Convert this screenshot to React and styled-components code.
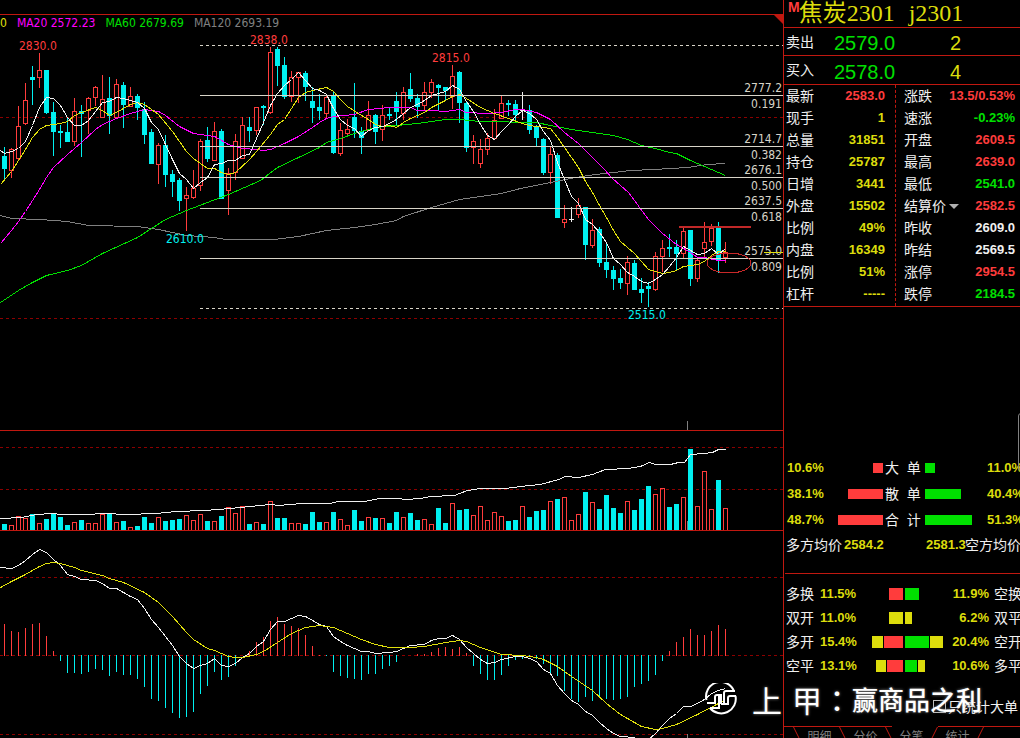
import React from 'react';
import styled, { createGlobalStyle } from 'styled-components';

const STEP = 7;
const FIRST_X = 4;
const xOf = (i) => FIRST_X + i * STEP;

// [kind, high, bodyTop, bodyBottom, low, volume, macd]   r = rising, c = falling, w = flat
const candles = [
	[ 'c', 147, 156, 169, 180, 6, 32 ], [ 'r', 148, 149, 171, 178, 5, 25 ], [ 'r', 106, 126, 159, 161, 14, 24 ],
	[ 'r', 83, 100, 124, 125, 12, 28 ], [ 'c', 66, 77, 80, 105, 16, 32 ], [ 'r', 53, 70, 78, 88, 7, 33 ],
	[ 'c', 70, 70, 113, 114, 11, 20 ], [ 'c', 102, 112, 132, 156, 17, 5 ], [ 'c', 125, 131, 133, 148, 13, -6 ],
	[ 'c', 118, 132, 142, 142, 5, -18 ], [ 'r', 98, 111, 142, 146, 8, -18 ], [ 'c', 105, 111, 114, 157, 10, -19 ],
	[ 'r', 97, 98, 111, 134, 7, -17 ], [ 'r', 86, 87, 98, 106, 7, -14 ], [ 'r', 75, 99, 118, 118, 16, -15 ],
	[ 'c', 77, 98, 116, 134, 16, -21 ], [ 'r', 79, 84, 118, 118, 8, -17 ], [ 'c', 82, 85, 105, 128, 9, -20 ],
	[ 'r', 87, 96, 107, 107, 3, -20 ], [ 'c', 94, 96, 108, 120, 4, -24 ], [ 'c', 102, 109, 135, 144, 13, -32 ],
	[ 'c', 129, 132, 164, 164, 7, -44 ], [ 'r', 143, 145, 165, 184, 13, -46 ], [ 'c', 135, 145, 175, 187, 9, -53 ],
	[ 'c', 170, 174, 182, 197, 10, -58 ], [ 'c', 178, 180, 201, 211, 11, -63 ], [ 'r', 187, 195, 199, 231, 15, -62 ],
	[ 'r', 170, 188, 198, 199, 10, -57 ], [ 'r', 139, 141, 186, 191, 16, -39 ], [ 'c', 127, 140, 159, 162, 9, -31 ],
	[ 'r', 122, 131, 161, 161, 9, -17 ], [ 'c', 129, 131, 199, 199, 14, -25 ], [ 'r', 168, 173, 191, 215, 23, -22 ],
	[ 'r', 134, 141, 173, 180, 17, -11 ], [ 'r', 117, 125, 159, 159, 24, 0 ], [ 'c', 117, 127, 131, 142, 6, 5 ],
	[ 'r', 107, 107, 131, 135, 8, 14 ], [ 'c', 105, 106, 108, 125, 6, 19 ], [ 'r', 47, 52, 113, 114, 29, 35 ],
	[ 'c', 47, 49, 66, 86, 12, 39 ], [ 'c', 57, 65, 97, 99, 12, 32 ], [ 'r', 71, 77, 97, 102, 7, 30 ],
	[ 'r', 72, 72, 78, 103, 7, 28 ], [ 'c', 71, 73, 87, 101, 6, 21 ], [ 'c', 87, 101, 108, 123, 18, 10 ],
	[ 'c', 94, 107, 111, 120, 8, 1 ], [ 'r', 95, 97, 114, 118, 8, -1 ], [ 'c', 91, 95, 153, 154, 18, -17 ],
	[ 'r', 123, 130, 154, 156, 11, -21 ], [ 'r', 119, 129, 134, 135, 5, -23 ], [ 'c', 83, 117, 131, 138, 20, -24 ],
	[ 'c', 127, 131, 138, 154, 9, -25 ], [ 'r', 101, 115, 131, 131, 13, -19 ], [ 'c', 114, 115, 132, 144, 12, -19 ],
	[ 'r', 105, 115, 130, 141, 12, -14 ], [ 'c', 108, 114, 116, 120, 7, -11 ], [ 'c', 92, 101, 112, 126, 18, -7 ],
	[ 'r', 87, 92, 114, 120, 13, 0 ], [ 'c', 73, 89, 99, 102, 17, 0 ], [ 'c', 94, 98, 107, 118, 10, 2 ],
	[ 'r', 82, 92, 106, 110, 11, 2 ], [ 'r', 79, 82, 93, 98, 6, 4 ], [ 'c', 84, 85, 88, 110, 22, 8 ],
	[ 'c', 87, 87, 91, 101, 7, 9 ], [ 'r', 65, 76, 97, 109, 27, 7 ], [ 'c', 71, 72, 103, 123, 20, 9 ],
	[ 'c', 101, 103, 148, 152, 21, 3 ], [ 'r', 135, 141, 148, 164, 15, -11 ], [ 'r', 139, 149, 164, 168, 24, -19 ],
	[ 'r', 133, 138, 150, 155, 10, -25 ], [ 'r', 109, 120, 139, 140, 18, -25 ], [ 'r', 96, 103, 119, 119, 14, -20 ],
	[ 'c', 100, 103, 105, 116, 9, -11 ], [ 'c', 100, 104, 115, 121, 10, -5 ], [ 'w', 92, 110, 111, 120, 24, -4 ],
	[ 'c', 105, 110, 130, 134, 13, -1 ], [ 'c', 125, 127, 138, 146, 19, -4 ], [ 'c', 138, 139, 173, 175, 20, -9 ],
	[ 'r', 147, 154, 173, 184, 29, -20 ], [ 'c', 153, 155, 218, 218, 31, -21 ], [ 'r', 205, 219, 223, 228, 33, -36 ],
	[ 'w', 207, 219, 220, 222, 10, -44 ], [ 'r', 198, 205, 215, 218, 16, -47 ], [ 'c', 207, 207, 245, 260, 38, -42 ],
	[ 'r', 219, 230, 246, 248, 28, -46 ], [ 'c', 227, 229, 263, 267, 21, -42 ], [ 'c', 242, 262, 270, 278, 35, -44 ],
	[ 'c', 266, 270, 279, 290, 22, -45 ], [ 'c', 269, 278, 283, 289, 17, -44 ], [ 'r', 256, 262, 284, 295, 29, -42 ],
	[ 'c', 260, 263, 290, 290, 20, -32 ], [ 'c', 278, 289, 293, 303, 31, -29 ], [ 'c', 282, 286, 289, 307, 44, -26 ],
	[ 'r', 252, 256, 290, 291, 36, -20 ], [ 'r', 240, 248, 257, 272, 42, -6 ], [ 'c', 234, 247, 249, 257, 23, 5 ],
	[ 'c', 240, 247, 254, 270, 26, 14 ], [ 'r', 227, 231, 254, 258, 33, 19 ], [ 'c', 230, 230, 279, 286, 81, 27 ],
	[ 'r', 258, 260, 279, 282, 24, 21 ], [ 'r', 222, 242, 249, 258, 59, 21 ], [ 'r', 224, 228, 242, 246, 21, 25 ],
	[ 'c', 222, 228, 260, 273, 50, 31 ], [ 'r', 242, 252, 258, 263, 22, 27 ]
];

const colors = {
	r: '#ff3c3c',
	c: '#00f0f0',
	w: '#f0f0f0',
	line: '#c01810',
	dash: '#8c0000',
	yellow: '#e0e00c',
	magenta: '#ff00ff',
	green: '#00e000',
	grey: '#808080',
	cream: '#d8d4c8'
};

const averages = [
	{
		color: colors.grey,
		points:
			'0,215 11,218 39,219 67,221 88,225 137,226 158,229 186,235 214,237 225,239 274,239 298,236 312,233 326,230 354,227 375,224 396,220 403,216 431,207 459,199 501,193 520,188 550,182 570,178 587,175 613,172 630,170 653,169 687,167 707,164 725,163'
	},
	{
		color: colors.green,
		points:
			'0,302 18,290 32,282 46,275 67,270 81,265 102,253 137,237 165,219 186,210 228,194 260,180 277,167 298,157 319,147 326,142 340,138 354,133 375,127 396,125 417,123 445,119 459,119 480,121 536,122 550,125 571,129 592,132 613,135 627,139 641,145 655,148 669,152 676,153 690,160 704,166 718,172 725,175'
	},
	{
		color: colors.magenta,
		points:
			'0,243 11,230 18,221 25,211 32,200 39,189 46,177 53,167 67,154 81,142 95,129 102,124 116,118 130,113 144,109 158,111 165,115 179,126 193,133 207,135 214,136 221,140 228,144 242,148 256,149 263,150 270,149 284,143 298,136 312,127 319,122 326,118 333,116 354,114 368,109 389,107 410,107 417,110 431,110 445,111 459,109 466,112 487,113 501,112 515,109 522,109 536,112 550,119 564,132 578,143 592,157 603,168 612,178 628,192 648,219 662,233 676,244 690,252 697,257 704,257 718,260 725,260'
	},
	{
		color: colors.yellow,
		points:
			'0,184 11,171 18,160 25,149 32,137 39,129 46,125 60,123 67,121 74,115 81,112 95,107 102,110 109,115 116,112 130,104 137,102 144,104 158,114 172,131 186,151 193,158 200,163 207,168 214,168 221,172 228,174 235,172 249,159 256,151 270,134 277,124 284,119 291,108 298,97 305,92 312,90 326,87 333,91 340,99 347,106 361,115 368,119 375,124 382,126 389,125 396,127 403,122 410,118 424,112 431,107 445,100 452,96 459,94 466,98 480,107 494,113 508,118 522,123 529,125 543,127 550,128 557,137 564,147 571,157 578,167 585,181 592,192 599,205 606,217 613,230 620,241 627,247 634,253 641,261 648,269 655,271 662,273 669,272 676,270 683,266 690,265 697,264 704,261 711,255 718,251 725,251'
	},
	{
		color: colors.w,
		points:
			'0,150 4,153 11,151 18,148 25,141 32,125 39,107 46,97 53,98 60,105 67,117 74,125 81,125 88,120 95,111 102,102 109,101 116,97 123,98 130,100 137,102 144,108 151,122 158,129 165,144 172,159 179,173 186,179 193,188 200,182 207,177 214,164 221,163 228,160 235,160 242,155 249,154 256,138 263,122 270,105 277,93 284,85 291,79 298,72 305,80 312,88 319,90 326,94 333,108 340,119 347,125 354,128 361,136 368,130 375,127 382,126 389,123 396,119 403,113 410,107 417,104 424,100 431,95 438,93 445,91 452,85 459,89 466,101 473,111 480,124 487,135 494,139 501,131 508,124 515,116 522,110 529,113 536,119 543,131 550,140 557,162 564,179 571,196 578,203 585,219 592,224 599,232 606,242 613,258 620,264 627,272 634,276 641,281 648,283 655,279 662,274 669,266 676,257 683,246 690,250 697,254 704,253 711,248 718,254 725,248'
	}
];

const openInterest =
	'0,518 21,517 36,514 52,513 60,514 84,514 105,513 126,514 155,513 176,511 204,510 218,509 240,507 270,504 278,505 302,503 330,503 337,501 364,501 379,498 397,498 405,499 420,498 430,496 454,495 467,490 480,488 505,488 520,486 540,484 558,479 565,476 578,477 592,474 605,469 628,468 640,466 649,462 655,464 670,464 678,462 684,462 690,454 704,453 712,452 718,449 725,449';

const dif =
	'0,567 11,568 18,565 25,560 32,554 39,549 46,552 53,559 60,565 67,574 74,576 81,579 95,580 102,583 109,588 116,588 130,596 137,599 144,608 151,619 158,627 172,645 179,656 186,663 193,668 200,665 207,663 214,658 221,665 228,666 235,663 242,657 249,653 256,646 263,641 270,629 277,621 284,621 291,618 298,615 305,616 312,620 319,624 326,626 333,636 340,641 347,645 354,648 361,651 368,651 375,653 389,652 396,651 403,648 410,645 424,644 431,640 438,638 445,638 452,635 459,639 466,647 473,653 480,659 487,663 494,662 501,659 515,656 522,656 529,658 536,661 543,669 550,673 557,685 564,693 571,700 578,704 585,711 592,715 599,722 606,728 613,733 620,736 634,737 640,741 646,741 655,733 662,725 669,718 676,713 683,706 690,706 697,703 704,699 711,693 718,690 725,688';

const dea =
	'0,587 11,581 25,574 39,566 46,563 53,562 60,563 74,567 81,570 102,575 109,578 123,582 144,592 158,602 172,616 186,632 193,639 207,648 214,650 228,656 235,657 242,657 256,654 263,651 277,642 291,633 305,627 319,625 333,627 347,633 361,639 375,644 389,647 410,647 424,646 445,642 459,640 466,641 480,647 501,654 522,655 536,657 543,659 557,666 571,676 592,690 606,703 620,714 641,726 655,729 662,728 676,724 697,714 718,703 725,700';

const levels = [
	{ y: 95, price: '2777.2', ratio: '0.191' },
	{ y: 146, price: '2714.7', ratio: '0.382' },
	{ y: 177, price: '2676.1', ratio: '0.500' },
	{ y: 208, price: '2637.5', ratio: '0.618' },
	{ y: 258, price: '2575.0', ratio: '0.809' }
];

const extremes = [
	{ x: 19, y: 50, text: '2830.0', color: colors.r },
	{ x: 250, y: 44, text: '2838.0', color: colors.r },
	{ x: 432, y: 62, text: '2815.0', color: colors.r },
	{ x: 166, y: 243, text: '2610.0', color: colors.c },
	{ x: 628, y: 319, text: '2515.0', color: colors.c }
];

const legend = [
	{ text: '0', color: colors.yellow },
	{ text: 'MA20 2572.23', color: colors.magenta },
	{ text: 'MA60 2679.69', color: colors.green },
	{ text: 'MA120 2693.19', color: colors.grey }
];

const asks = [
	{ side: '卖出', price: '2579.0', amount: '2' },
	{ side: '买入', price: '2578.0', amount: '4' }
];

const quotesLeft = [
	[ '最新', '2583.0', 'red' ],
	[ '现手', '1', 'yellow' ],
	[ '总量', '31851', 'yellow' ],
	[ '持仓', '25787', 'yellow' ],
	[ '日增', '3441', 'yellow' ],
	[ '外盘', '15502', 'yellow' ],
	[ '比例', '49%', 'yellow' ],
	[ '内盘', '16349', 'yellow' ],
	[ '比例', '51%', 'yellow' ],
	[ '杠杆', '-----', 'yellow' ]
];

const quotesRight = [
	[ '涨跌', '13.5/0.53%', 'red' ],
	[ '速涨', '-0.23%', 'green' ],
	[ '开盘', '2609.5', 'red' ],
	[ '最高', '2639.0', 'red' ],
	[ '最低', '2541.0', 'green' ],
	[ '结算价', '2582.5', 'red' ],
	[ '昨收', '2609.0', 'white' ],
	[ '昨结', '2569.5', 'white' ],
	[ '涨停', '2954.5', 'red' ],
	[ '跌停', '2184.5', 'green' ]
];

const orders = [
	{ name: '大  单', buy: '10.6%', sell: '11.0%', buyBar: 10, sellBar: 10 },
	{ name: '散  单', buy: '38.1%', sell: '40.4%', buyBar: 35, sellBar: 36 },
	{ name: '合  计', buy: '48.7%', sell: '51.3%', buyBar: 45, sellBar: 47 }
];

const flows = [
	{ left: '多换', lp: '11.5%', lBars: [ [ 'red', 14 ] ], rBars: [ [ 'green', 14 ] ], rp: '11.9%', right: '空换' },
	{ left: '双开', lp: '11.0%', lBars: [ [ 'yellow', 14 ] ], rBars: [ [ 'yellow', 7 ] ], rp: '6.2%', right: '双平' },
	{
		left: '多开',
		lp: '15.4%',
		lBars: [ [ 'yellow', 11 ], [ 'red', 19 ] ],
		rBars: [ [ 'green', 24 ], [ 'yellow', 13 ] ],
		rp: '20.4%',
		right: '空开'
	},
	{
		left: '空平',
		lp: '13.1%',
		lBars: [ [ 'yellow', 10 ], [ 'red', 16 ] ],
		rBars: [ [ 'green', 12 ], [ 'yellow', 7 ] ],
		rp: '10.6%',
		right: '多平'
	}
];

const tabs = [ '明细', '分价', '分笔', '统计' ];

// full-width horizontal line
const Rule = ({ y, color = colors.dash, x = 0, dashed = true }) => (
	<line x1={x} x2="100%" y1={y + 0.5} y2={y + 0.5} stroke={color} strokeDasharray={dashed ? '3 3' : undefined} />
);

const Curve = ({ points, color }) => (
	<polyline points={points} fill="none" stroke={color} transform="translate(0.5 0.5)" />
);

function Candle ({ index, data }) {
	const [ kind, high, top, bottom, low ] = data;
	const x = xOf(index);
	const color = colors[kind];
	if (kind === 'r') {
		return (
			<g>
				<rect x={x} y={high} width="1" height={Math.max(top - high, 0)} fill={color} />
				<rect x={x} y={bottom} width="1" height={Math.max(low - bottom, 0)} fill={color} />
				<rect x={x - 1.5} y={top + 0.5} width="4" height={bottom - top - 1} fill="none" stroke={color} />
			</g>
		);
	}
	return (
		<g fill={color}>
			<rect x={x} y={high} width="1" height={low - high} />
			<rect x={x - 2} y={top} width="5" height={bottom - top} />
		</g>
	);
}

function PriceChart () {
	return (
		<PricePane>
			<Legend>
				{legend.map((item) => (
					<LegendItem key={item.text} $color={item.color}>
						{item.text}
					</LegendItem>
				))}
				<Corner />
			</Legend>
			<Plot role="img" aria-label="K线">
				<g transform="translate(0 -30)">
					<Rule y={117} />
					<Rule y={318} />
					{candles.map((data, i) => <Candle key={i} index={i} data={data} />)}
					{averages.map((line) => <Curve key={line.color} {...line} />)}
					<Rule y={45} x={200} color={colors.cream} />
					<Rule y={308} x={200} color={colors.cream} />
					{levels.map((level) => (
						<g key={level.price}>
							<Rule y={level.y} x={200} color={colors.cream} dashed={false} />
							<ChartText x="100%" dx="-1" y={level.y - 3} textAnchor="end" fill={colors.cream}>
								{level.price}
							</ChartText>
							<ChartText x="100%" dx="-1" y={level.y + 13} textAnchor="end" fill={colors.cream}>
								{level.ratio}
							</ChartText>
						</g>
					))}
					{extremes.map((item) => (
						<ChartText key={item.text} x={item.x} y={item.y} fill={item.color}>
							{item.text}
						</ChartText>
					))}
					<rect x="679" y="226" width="72" height="2" fill="#c02828" />
					<ellipse cx="729" cy="263" rx="22" ry="10" fill="none" stroke="#c82828" />
					<rect x="764" y="252" width="19" height="1" fill={colors.yellow} />
					<rect x="687" y="421" width="1" height="9" fill={colors.grey} />
				</g>
			</Plot>
		</PricePane>
	);
}

function VolumeChart () {
	return (
		<VolumePane>
			<Plot role="img" aria-label="成交量">
				<g transform="translate(0 -431)">
					<Rule y={447} />
					<Rule y={489} />
					{candles.map(([ kind, , , , , volume ], i) => {
						const x = xOf(i);
						return kind === 'c' ? (
							<rect key={i} x={x - 2} y={530 - volume} width="5" height={volume} fill={colors.c} />
						) : (
							<rect key={i} x={x - 1.5} y={530.5 - volume} width="4" height={volume} fill="none" stroke={colors.r} />
						);
					})}
					<rect x="687" y="521" width="1" height="9" fill={colors.grey} />
					<Curve points={openInterest} color={colors.w} />
				</g>
			</Plot>
		</VolumePane>
	);
}

function MacdChart () {
	return (
		<MacdPane>
			<Plot role="img" aria-label="MACD">
				<g transform="translate(0 -531)">
					<Rule y={577} />
					<Rule y={655} />
					<Rule y={734} />
					{candles.map((data, i) => {
						const value = data[6];
						return (
							<rect
								key={i}
								x={xOf(i)}
								y={value > 0 ? 656 - value : 655}
								width="1"
								height={Math.abs(value)}
								fill={value > 0 ? colors.r : colors.c}
							/>
						);
					})}
					<Curve points={dif} color={colors.w} />
					<Curve points={dea} color={colors.yellow} />
					<rect x="687" y="734" width="1" height="4" fill={colors.grey} />
				</g>
			</Plot>
		</MacdPane>
	);
}

function Bars ({ items, end }) {
	return (
		<BarGroup $end={end}>
			{items.map(([ tone, width ], i) => <FlowBar key={i} $tone={tone} style={{ width }} />)}
		</BarGroup>
	);
}

function SidePanel () {
	return (
		<Panel>
			<Title>
				<Mark>M</Mark>
				<span>焦炭2301</span>
				<span>j2301</span>
			</Title>
			{asks.map((item) => (
				<AskRow key={item.side}>
					<Label>{item.side}</Label>
					<BigNumber $tone="green">{item.price}</BigNumber>
					<BigNumber $tone="yellow">{item.amount}</BigNumber>
				</AskRow>
			))}
			<Quotes>
				<QuoteColumn>
					{quotesLeft.map(([ name, value, tone ], i) => (
						<QuoteRow key={i}>
							<Label>{name}</Label>
							<Value $tone={tone}>{value}</Value>
						</QuoteRow>
					))}
				</QuoteColumn>
				<QuoteColumn $divided>
					{quotesRight.map(([ name, value, tone ]) => (
						<QuoteRow key={name}>
							{name === '结算价' ? (
								<SelectWrap>
									<PriceSelect aria-label="结算价" defaultValue={name}>
										<option>{name}</option>
									</PriceSelect>
									<Caret />
								</SelectWrap>
							) : (
								<Label>{name}</Label>
							)}
							<Value $tone={tone}>{value}</Value>
						</QuoteRow>
					))}
				</QuoteColumn>
			</Quotes>
			<Orders>
				{orders.map((item) => (
					<OrderRow key={item.name}>
						<Value $tone="yellow">{item.buy}</Value>
						<BarGroup $end>
							<OrderBar $tone="red" style={{ width: item.buyBar }} />
						</BarGroup>
						<OrderName>{item.name}</OrderName>
						<BarGroup>
							<OrderBar $tone="green" style={{ width: item.sellBar }} />
						</BarGroup>
						<Value $tone="yellow">{item.sell}</Value>
					</OrderRow>
				))}
				<AverageRow>
					<Label>多方均价</Label>
					<Value $tone="yellow">2584.2</Value>
					<Value $tone="yellow">2581.3</Value>
					<Label>空方均价</Label>
				</AverageRow>
			</Orders>
			<Flows>
				{flows.map((item) => (
					<FlowRow key={item.left}>
						<Label>{item.left}</Label>
						<Value $tone="yellow">{item.lp}</Value>
						<Bars items={item.lBars} end />
						<Bars items={item.rBars} />
						<Value $tone="yellow">{item.rp}</Value>
						<Label>{item.right}</Label>
					</FlowRow>
				))}
			</Flows>
			<OnlyBig>
				<input type="checkbox" id="onlyBig" defaultChecked />
				<label htmlFor="onlyBig">只统计大单</label>
			</OnlyBig>
			<TabBar>
				<Slash $line />
				{tabs.map((name, i) => (
					<React.Fragment key={name}>
						<Tab $active={i === 2}>{name}</Tab>
						<Slash $forward={i > 1} $line={i !== 2} />
					</React.Fragment>
				))}
				<TabRest />
			</TabBar>
		</Panel>
	);
}

// tab edge, leaning left or right
function Slash ({ $forward, $line }) {
	return (
		<SlashBox $line={$line}>
			<svg width="7" height="12" viewBox="0 0 7 12">
				<path d={$forward ? 'M6.5 0L0.5 12' : 'M0.5 0L6.5 12'} stroke={colors.line} />
			</svg>
		</SlashBox>
	);
}

export default function App () {
	return (
		<Screen>
			<GlobalStyle />
			<Charts>
				<TopStrip />
				<PriceChart />
				<VolumeChart />
				<MacdChart />
			</Charts>
			<SidePanel />
			<ScrollThumb />
			<Watermark>
				<svg width="32" height="32" viewBox="0 0 32 32" fill="none" stroke="#fff" strokeWidth="2">
					<path d="M1.5 17A14.5 14.5 0 0 1 29 8" />
					<path d="M30.5 13A14.5 14.5 0 0 1 5 25" />
					<path d="M2 20H10V14Q10 12 12 12H15" />
					<path d="M5 25H14V13Q14 12 15 12H16V21" />
					<path d="M30 8H21Q19 8 19 10V21H16" />
					<path d="M31 13H25Q23 13 23 15V21H19" />
				</svg>
				<span>上</span>
				<span>甲</span>
				<span>：</span>
				<Slogan>赢商品之利</Slogan>
			</Watermark>
		</Screen>
	);
}

const tones = {
	red: '#ff3c3c',
	green: '#00e000',
	yellow: '#dcdc0c',
	white: '#f0f0f0'
};

const GlobalStyle = createGlobalStyle`
	* {
		box-sizing: border-box;
	}
	body {
		margin: 0;
		background: #000;
		color: #f0f0f0;
		font-family: "Liberation Sans", "Noto Sans CJK SC", sans-serif;
		font-size: 14px;
	}
`;

const Screen = styled.div`
	position: relative;
	display: flex;
	height: 100vh;
	overflow: hidden;
`;

const Charts = styled.main`
	flex: 1;
	min-width: 0;
	display: flex;
	flex-direction: column;
`;

const TopStrip = styled.div`
	height: 15px;
	flex: none;
	border-bottom: 1px solid ${colors.line};
`;

const PricePane = styled.section`
	display: flex;
	flex-direction: column;
	flex: none;
	height: 416px;
	border-bottom: 1px solid ${colors.line};
`;

const VolumePane = styled.section`
	flex: none;
	height: 100px;
	border-bottom: 1px solid ${colors.line};
`;

const MacdPane = styled.section`
	flex: 1;
	min-height: 0;
`;

const Legend = styled.div`
	display: flex;
	flex: none;
	gap: 10px;
	height: 15px;
	line-height: 16px;
	font-family: "DejaVu Sans Condensed", "Noto Sans", sans-serif;
	font-size: 12px;
	white-space: nowrap;
`;

const LegendItem = styled.span`
	color: ${(p) => p.$color};
`;

const Corner = styled.span`
	margin-left: auto;
	width: 9px;
	height: 9px;
	background: ${colors.line};
	clip-path: polygon(0 0, 100% 0, 100% 100%);
`;

const Plot = styled.svg`
	display: block;
	width: 100%;
	height: 100%;
	min-height: 0;
	shape-rendering: crispEdges;
`;

const ChartText = styled.text`
	font-family: "DejaVu Sans Condensed", "Noto Sans", sans-serif;
	font-size: 12px;
`;

const Panel = styled.aside`
	flex: none;
	width: 237px;
	display: flex;
	flex-direction: column;
	border-left: 1px solid ${colors.line};
	overflow: hidden;
	white-space: nowrap;
`;

const Title = styled.h1`
	display: flex;
	gap: 14px;
	height: 28px;
	margin: 0;
	padding-left: 4px;
	border-bottom: 1px solid ${colors.line};
	color: ${tones.yellow};
	font: 400 24px/27px "Liberation Serif", "Noto Sans CJK SC", serif;
`;

const Mark = styled.sup`
	margin-right: -15px;
	color: ${tones.red};
	font: bold 14px/15px "Liberation Sans", sans-serif;
`;

const AskRow = styled.div`
	display: grid;
	grid-template-columns: 48px 116px 1fr;
	align-items: center;
	height: 28px;
	padding-left: 2px;
	border-bottom: 1px solid ${colors.line};

	& + & {
		height: 29px;
	}
`;

const Label = styled.span`
	color: #f0f0f0;
	line-height: 18px;
`;

const BigNumber = styled.span`
	padding-top: 3px;
	color: ${(p) => tones[p.$tone]};
	font-size: 20px;
	line-height: 24px;
`;

const Value = styled.span`
	color: ${(p) => tones[p.$tone]};
	font-size: 13px;
	font-weight: bold;
	line-height: 14px;
`;

const Quotes = styled.section`
	display: flex;
	height: 222px;
	padding: 0 5px 0 2px;
	border-bottom: 1px solid ${colors.line};
`;

const QuoteColumn = styled.div`
	width: ${(p) => (p.$divided ? 'auto' : '109px')};
	flex: ${(p) => (p.$divided ? 1 : 'none')};
	padding-left: ${(p) => (p.$divided ? '8px' : '0')};
	padding-right: ${(p) => (p.$divided ? '0' : '10px')};
	border-left: ${(p) => (p.$divided ? `1px dashed ${colors.line}` : 'none')};
`;

const QuoteRow = styled.div`
	display: flex;
	justify-content: space-between;
	align-items: center;
	height: 22px;
`;

const SelectWrap = styled.span`
	display: flex;
	align-items: center;
	gap: 3px;
`;

const PriceSelect = styled.select`
	appearance: none;
	width: 42px;
	padding: 0;
	border: 0;
	background: transparent;
	color: #f0f0f0;
	font: inherit;
`;

const Caret = styled.span`
	border: 5px solid transparent;
	border-top-color: #b0b0b0;
	border-bottom: 0;
`;

const Orders = styled.section`
	margin-top: 148px;
	height: 119px;
	flex: none;
	margin-left: 1px;
	border-bottom: 1px solid ${colors.line};
`;

const OrderRow = styled.div`
	display: grid;
	grid-template-columns: 36px 60px 42px 62px auto;
	align-items: center;
	height: 26px;
	padding-left: 2px;
`;

const OrderName = styled(Label)`
	padding-left: 2px;
	white-space: pre;
`;

const BarGroup = styled.span`
	display: flex;
	gap: 1px;
	justify-content: ${(p) => (p.$end ? 'flex-end' : 'flex-start')};
`;

const OrderBar = styled.span`
	height: 10px;
	background: ${(p) => tones[p.$tone]};
`;

const FlowBar = styled(OrderBar)`
	height: 12px;
`;

const AverageRow = styled.div`
	display: grid;
	grid-template-columns: 58px 82px 39px auto;
	align-items: center;
	height: 24px;
	padding-left: 1px;
`;

const Flows = styled.section`
	padding: 8px 0 0 2px;
`;

const FlowRow = styled.div`
	display: grid;
	grid-template-columns: 34px 36px 47px 47px 39px auto;
	column-gap: 0;
	align-items: center;
	height: 24px;

	/* a thin gap stays open between both sides of the bars */
	> :nth-child(4) {
		padding-left: 2px;
	}
	> :nth-child(5) {
		text-align: right;
	}
	> :nth-child(6) {
		padding-left: 5px;
	}
`;

const OnlyBig = styled.div`
	display: flex;
	align-items: center;
	gap: 2px;
	margin-top: auto;
	margin-bottom: 10px;
	padding-left: 149px;
	height: 20px;

	input {
		appearance: none;
		width: 13px;
		height: 13px;
		margin: 0;
		border: 1px solid #c0c0c0;
	}
`;

const TabBar = styled.nav`
	display: flex;
	flex: none;
	height: 12px;
	overflow: hidden;
`;

const Tab = styled.button`
	width: 39px;
	height: 18px;
	padding: 0;
	border: 0;
	border-top: 1px solid ${(p) => (p.$active ? 'transparent' : colors.line)};
	background: none;
	color: #808080;
	font: 400 12px/14px "Noto Sans CJK SC", sans-serif;
`;

const SlashBox = styled.span`
	width: 7px;
	height: 12px;
	border-top: 1px solid ${(p) => (p.$line ? colors.line : 'transparent')};

	&:first-child {
		width: 16px;
		padding-left: 9px;
	}
	svg {
		display: block;
	}
`;

const TabRest = styled.span`
	flex: 1;
	border-top: 1px solid ${colors.line};
`;

const ScrollThumb = styled.div`
	position: absolute;
	right: -4px;
	top: 413px;
	width: 6px;
	height: 58px;
	border: 1px solid #808080;
	border-radius: 3px;
`;

const Watermark = styled.div`
	position: absolute;
	right: 38px;
	bottom: 19px;
	display: flex;
	align-items: center;
	height: 40px;
	color: #fff;
	font: 400 30px/40px "Noto Sans CJK TC", sans-serif;
	text-shadow: 0 0 3px #888;

	svg {
		margin-right: 15px;
	}
	span + span {
		margin-left: 10px;
	}
	span + span + span {
		margin-left: 0;
	}
`;

const Slogan = styled.strong`
	font-family: "Noto Sans CJK SC", sans-serif;
	font-size: 26px;
	font-weight: 500;
`;
